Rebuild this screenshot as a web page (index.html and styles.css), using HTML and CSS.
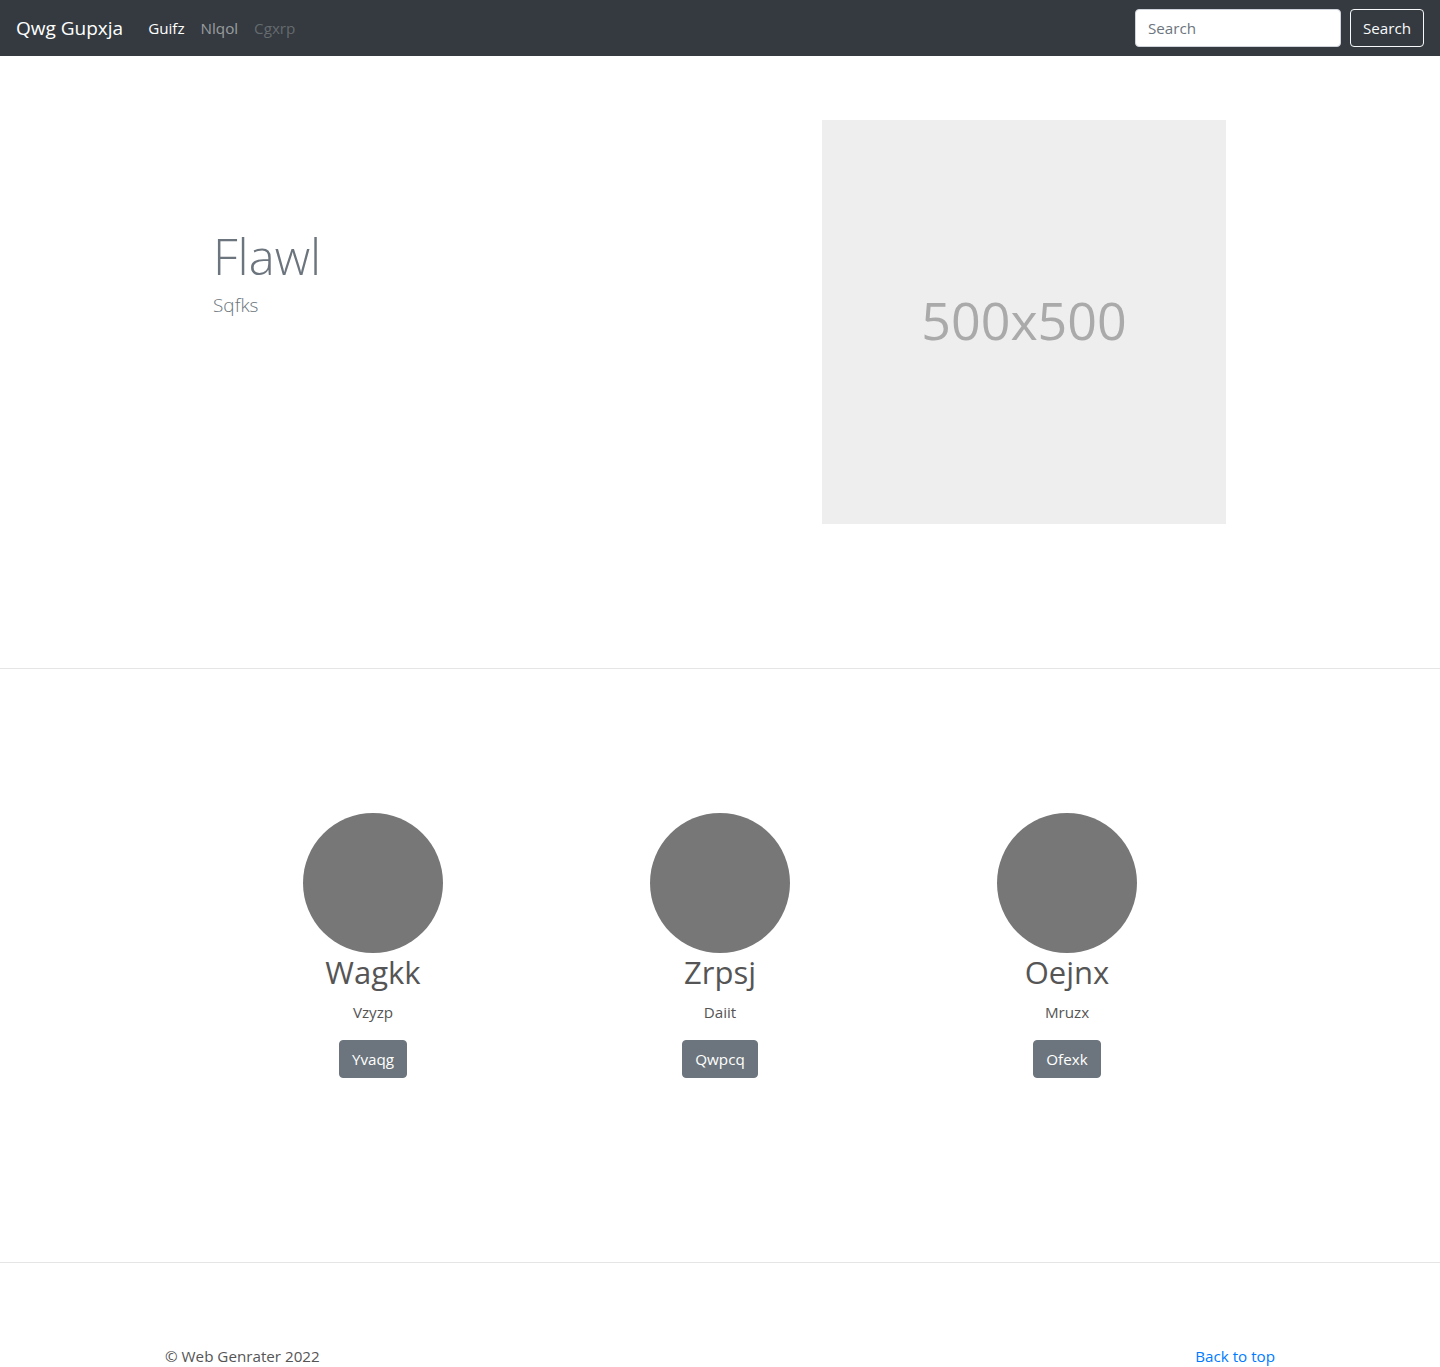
FILE: index.html
```html
<!DOCTYPE html>
<html lang="en">
<head>
<meta charset="utf-8">
<title>Qwg Gupxja</title>
<link rel="stylesheet" href="styles.css">
</head>
<body>
<nav class="navbar">
  <a class="brand" href="#">Qwg Gupxja</a>
  <ul class="nav">
    <li><a class="nav-link active" href="#">Guifz</a></li>
    <li><a class="nav-link" href="#">Nlqol</a></li>
    <li><a class="nav-link disabled" href="#">Cgxrp</a></li>
  </ul>
  <form class="search">
    <input class="search-input" type="text" placeholder="Search">
    <button class="btn-outline" type="button">Search</button>
  </form>
</nav>

<section class="hero">
  <div class="hero-text">
    <h1 class="hero-title">Flawl</h1>
    <p class="hero-lead">Sqfks</p>
  </div>
  <div class="hero-media">
    <div class="placeholder">500x500</div>
  </div>
</section>

<hr class="divider">

<section class="team">
  <div class="member">
    <div class="avatar"></div>
    <h2 class="member-name">Wagkk</h2>
    <p class="member-role">Vzyzp</p>
    <a class="btn-secondary" href="#">Yvaqg</a>
  </div>
  <div class="member">
    <div class="avatar"></div>
    <h2 class="member-name">Zrpsj</h2>
    <p class="member-role">Daiit</p>
    <a class="btn-secondary" href="#">Qwpcq</a>
  </div>
  <div class="member">
    <div class="avatar"></div>
    <h2 class="member-name">Oejnx</h2>
    <p class="member-role">Mruzx</p>
    <a class="btn-secondary" href="#">Ofexk</a>
  </div>
</section>

<hr class="divider">

<footer class="footer">
  <p class="copy">© Web Genrater 2022</p>
  <a class="to-top" href="#">Back to top</a>
</footer>
</body>
</html>
```

FILE: styles.css
```css
* { box-sizing: border-box; }
html, body { margin: 0; padding: 0; }
body {
  font-family: "Open Sans", "Noto Sans", "Liberation Sans", sans-serif;
  font-size: 15.2px;
  line-height: 24px;
  color: #212529;
  background: #fff;
}
a { text-decoration: none; }

.navbar {
  height: 56px;
  background: #343a40;
  display: flex;
  align-items: center;
  padding: 8px 16px;
}
.brand {
  color: #fff;
  font-size: 19px;
  line-height: 30px;
  margin-right: 17px;
}
.nav {
  list-style: none;
  margin: 0;
  padding: 0;
  display: flex;
  flex: 1;
}
.nav-link {
  display: block;
  padding: 8px;
  color: rgba(255,255,255,.5);
}
.nav-link.active { color: #fff; }
.nav-link.disabled { color: rgba(255,255,255,.25); }
.search { display: flex; align-items: center; }
.search-input {
  width: 206px;
  height: 38px;
  margin-right: 9px;
  padding: 6px 12px;
  font: inherit;
  border: 1px solid #ced4da;
  border-radius: 4px;
  background: #fff;
  color: #495057;
}
.search-input::placeholder { color: #6c757d; }
.btn-outline {
  height: 38px;
  padding: 6px 12px;
  font: inherit;
  color: #f8f9fa;
  background: transparent;
  border: 1px solid #f8f9fa;
  border-radius: 4px;
}

.hero {
  width: 1140px;
  margin: 0 auto;
  display: flex;
  padding: 64px 0 144px;
}
.hero-text {
  width: 570px;
  padding: 107px 48px 0 63px;
}
.hero-title {
  margin: 0 0 5px;
  font-size: 49px;
  font-weight: 300;
  line-height: 1.2;
  color: #6c757d;
}
.hero-lead {
  margin: 0;
  font-size: 19px;
  line-height: 1.5;
  font-weight: 300;
  color: #6c757d;
}
.hero-media {
  width: 570px;
  padding-left: 102px;
}
.placeholder {
  width: 404px;
  height: 404px;
  background: #eee;
  color: #aaa;
  font-size: 52px;
  display: flex;
  align-items: center;
  justify-content: center;
  padding-bottom: 4px;
}

.divider {
  margin: 0;
  border: 0;
  border-top: 1px solid rgba(0,0,0,.1);
}

.team {
  width: 1041px;
  margin: 0 auto;
  display: grid;
  grid-template-columns: repeat(3, 1fr);
  padding: 144px 0 184px;
}
.member {
  display: flex;
  flex-direction: column;
  align-items: center;
  text-align: center;
}
.avatar {
  width: 140px;
  height: 140px;
  border-radius: 50%;
  background: #777;
}
.member-name {
  margin: 1px 0 9px;
  font-size: 31px;
  font-weight: 400;
  line-height: 1.2;
  color: #555;
}
.member-role {
  margin: 0 0 16px;
  color: #555;
}
.btn-secondary {
  display: inline-block;
  padding: 6px 12px;
  line-height: 24px;
  color: #fff;
  background: #6c757d;
  border: 1px solid #6c757d;
  border-radius: 4px;
}

.footer {
  width: 1140px;
  margin: 0 auto;
  padding: 81px 15px 0;
  display: flex;
  justify-content: space-between;
  align-items: flex-start;
}
.copy { margin: 0; color: #555; }
.to-top { color: #007bff; }
```
